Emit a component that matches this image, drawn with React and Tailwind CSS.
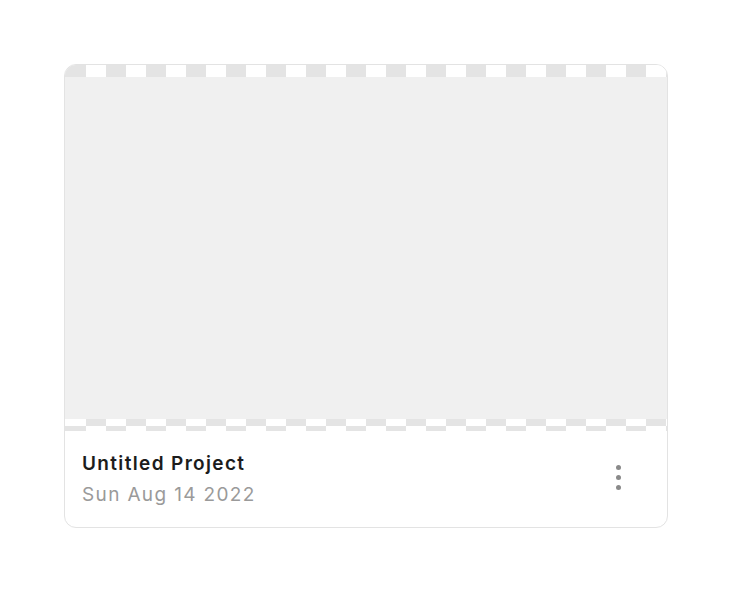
/**
 * Project card with filmstrip-style preview
 */

const SQUARES = Array.from({ length: 31 }, (_, i) => i);

function StripRow({ startGray, height }) {
  return (
    <div className={`flex overflow-hidden ${height}`}>
      {SQUARES.map((i) => {
        const gray = (i % 2 === 0) === startGray;
        return (
          <div
            key={i}
            className={`shrink-0 ${i === 0 ? 'w-[21px]' : 'w-[20px]'} ${gray ? 'bg-[#e4e4e4]' : 'bg-white'}`}
          />
        );
      })}
    </div>
  );
}

export default function App() {
  return (
    <div className="w-[732px] h-[592px] bg-white pt-[64px] pl-[64px]" style={{ fontFamily: 'Inter, "Noto Sans", sans-serif' }}>
      <div className="w-[604px] h-[464px] rounded-[12px] border border-[#e3e3e3] overflow-hidden flex flex-col">
        {/* Preview */}
        <div className="flex flex-col">
          <StripRow startGray={true} height="h-[12px]" />
          <div className="h-[342px] bg-[#f0f0f0]" />
          <StripRow startGray={false} height="h-[7px]" />
          <StripRow startGray={true} height="h-[5px]" />
        </div>

        {/* Footer */}
        <div className="flex-1 flex items-center justify-between pl-[17px] pr-[46px]">
          <div className="flex flex-col tracking-[1.35px]">
            <span className="text-[19px] leading-[31px] font-semibold text-[#1c1c1c]">Untitled Project</span>
            <span className="text-[19px] leading-[31px] text-[#9a9a9a]">Sun Aug 14 2022</span>
          </div>
          <div className="flex flex-col gap-[5px] mb-[3px]">
            <span className="w-[5px] h-[5px] rounded-full bg-[#8a8a8a]" />
            <span className="w-[5px] h-[5px] rounded-full bg-[#8a8a8a]" />
            <span className="w-[5px] h-[5px] rounded-full bg-[#8a8a8a]" />
          </div>
        </div>
      </div>
    </div>
  );
}
